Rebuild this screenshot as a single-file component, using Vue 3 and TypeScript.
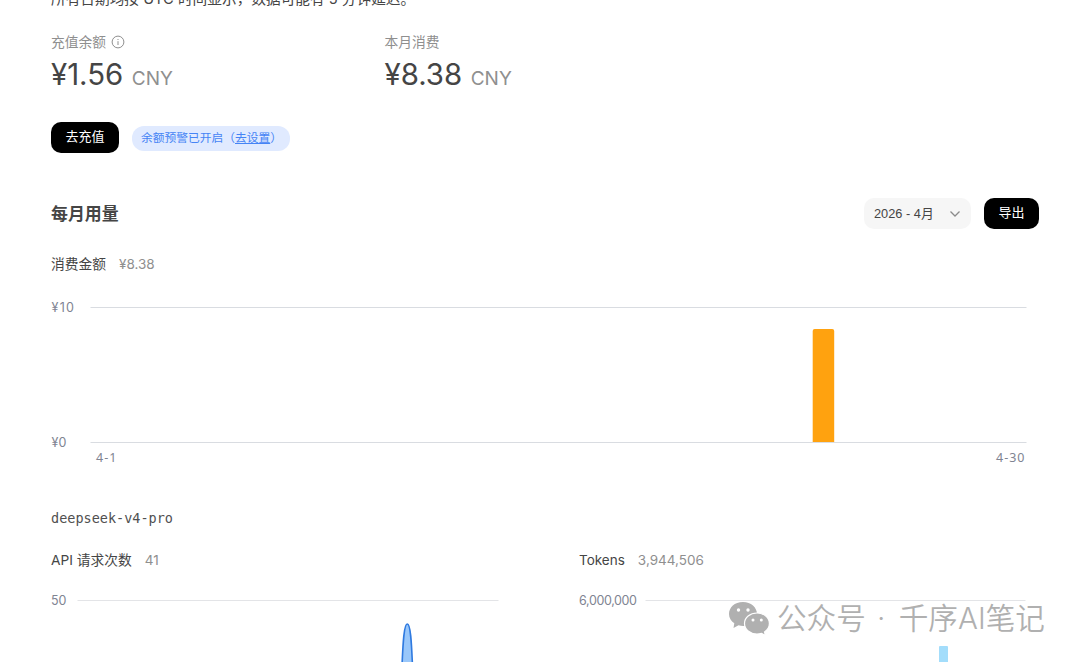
<script setup lang="ts">
interface Balance {
  label: string
  amount: string
  info: boolean
}

const balances: Balance[] = [
  { label: '充值余额', amount: '¥1.56', info: true },
  { label: '本月消费', amount: '¥8.38', info: false },
]
</script>

<template>
  <main class="page">
    <p class="notice">所有日期均按 UTC 时间显示，数据可能有 5 分钟延迟。</p>

    <section class="balances">
      <div v-for="b in balances" :key="b.label" class="balance">
        <div class="balance-label">
          <span>{{ b.label }}</span>
          <svg v-if="b.info" class="info" viewBox="0 0 14 14" width="14" height="14">
            <circle cx="7" cy="7" r="5.9" />
            <path d="M7 6.2V10M7 4V5" />
          </svg>
        </div>
        <div class="balance-value">
          <span class="amount">{{ b.amount }}</span>
          <span class="currency">CNY</span>
        </div>
      </div>
    </section>

    <section class="actions">
      <button class="btn recharge">去充值</button>
      <div class="alert">余额预警已开启（<a>去设置</a>）</div>
    </section>

    <header class="usage-head">
      <h2>每月用量</h2>
      <div class="select">
        <span>2026 - 4月</span>
        <svg viewBox="0 0 12 8" width="12" height="8"><path d="M1.500 1.500L6 6L10.500 1.500" /></svg>
      </div>
      <button class="btn export">导出</button>
    </header>

    <div class="metric cost"><span class="cjk">消费金额</span><em>¥8.38</em></div>
    <svg class="chart" width="988" height="180" viewBox="0 0 988 180">
      <path class="grid" d="M39.500 12.500H975.500M39.500 147.500H975.500" />
      <path class="cost-bar" d="M761.700 147V36q0-2 2-2h17.500q2 0 2 2V147z" />
      <text class="axis" x="0.500" y="17" textLength="22.500">¥10</text>
      <text class="axis" x="0.500" y="152" textLength="15">¥0</text>
      <text class="axis date" x="45" y="167" textLength="20.500">4-1</text>
      <text class="axis date" x="945" y="167" textLength="28.500">4-30</text>
    </svg>

    <h3 class="model">deepseek-v4-pro</h3>
    <section class="charts">
      <div class="panel">
        <div class="metric"><span class="cjk">API 请求次数</span><em>41</em></div>
        <svg class="chart" width="460" height="92" viewBox="0 0 460 92">
          <path class="grid soft" d="M26.500 30.500H447.500" />
          <text class="axis" x="0" y="35" textLength="15.500">50</text>
          <path class="request-line" d="M351 96C352 72 353 54 356.300 54S360.500 72 361.500 96" />
        </svg>
      </div>
      <div class="panel">
        <div class="metric"><span class="tokens">Tokens</span><em>3,944,506</em></div>
        <svg class="chart" width="460" height="92" viewBox="0 0 460 92">
          <path class="grid soft" d="M66.500 30.500H446.500" />
          <text class="axis" x="0" y="35" textLength="58">6,000,000</text>
          <path class="token-bar" d="M360 92V77q0-1 1-1h7q1 0 1 1V92z" />
        </svg>
      </div>
    </section>

    <aside class="watermark">
      <svg viewBox="0 0 42 34" width="42" height="34">
        <path class="bubble" d="M15 1C6.500 1 1 6.500 1 13c0 4 2 7 5.300 9.300L5.500 27l5-2.700c1.500.4 3 .6 5 .6C23 25 29 19.500 29 13S23 1 15 1z" />
        <path class="bubble front" d="M29 12c-7 0-12.500 4.600-12.500 10.500S22 33 29 33c1.500 0 3-.2 4.500-.7l4 2.200-1-3.600c3-2 4.900-5 4.900-8.400C41.400 16.600 36 12 29 12z" />
        <circle cx="10.500" cy="9" r="1.700" /><circle cx="20" cy="9" r="1.700" />
        <circle cx="25" cy="19" r="1.500" /><circle cx="33.300" cy="19" r="1.500" />
      </svg>
      <span class="wm-kind">公众号</span><span class="wm-dot">·</span><span class="wm-name">千序AI笔记</span>
    </aside>
  </main>
</template>

<style>
body {
  background: #fff;
  overflow: hidden;
}
</style>

<style scoped>
.page {
  position: relative;
  box-sizing: border-box;
  width: 1080px;
  height: 662px;
  padding: 0 41px 0 51px;
  overflow: hidden;
  color: #454545;
  font-family: Inter, "Noto Sans CJK SC", sans-serif;
  font-size: 13.750px;
}
.notice {
  height: 20px;
  margin: -11px 0 0;
  font-size: 14.680px;
  line-height: 20px;
  white-space: nowrap;
}
.balances {
  display: flex;
  margin-top: 23px;
}
.balance {
  width: 333.500px;
}
.balance-label {
  display: flex;
  align-items: center;
  gap: 5px;
  height: 20px;
  color: #8f8f8f;
}
.balance-label span {
  height: 20px;
  line-height: 20px;
}
.info {
  fill: none;
  stroke: #8f8f8f;
  stroke-width: 1;
}
.balance-value {
  display: flex;
  align-items: baseline;
  gap: 8.500px;
  height: 44px;
  line-height: 45px;
}
.amount {
  font-size: 29.400px;
}
.currency {
  color: #8f8f8f;
  font-size: 19px;
}
.actions {
  display: flex;
  align-items: center;
  gap: 13px;
  height: 31px;
  margin-top: 26px;
}
.btn {
  height: 31px;
  padding: 0 0 2px;
  border: 0;
  border-radius: 10px;
  background: #000;
  color: #fff;
  font: 13px/29px Inter, "Noto Sans CJK SC", sans-serif;
}
.recharge {
  width: 68px;
}
.alert {
  box-sizing: border-box;
  width: 158px;
  height: 25px;
  margin-top: 1px;
  padding-left: 9px;
  border-radius: 12px;
  background: #e0eaff;
  color: #4584f5;
  font-size: 11.750px;
  line-height: 24px;
  white-space: nowrap;
}
.alert a {
  text-decoration: underline;
}
.usage-head {
  display: flex;
  align-items: center;
  height: 31px;
  margin-top: 45px;
}
.usage-head h2 {
  flex: 1;
  margin: 0;
  font-size: 16.900px;
  font-weight: 700;
  line-height: 24px;
}
.select {
  display: flex;
  align-items: center;
  justify-content: space-between;
  box-sizing: border-box;
  width: 107px;
  height: 31px;
  margin-right: 13px;
  padding: 0 10px;
  border-radius: 10px;
  background: #f6f6f6;
  font-family: "Liberation Sans", "Noto Sans CJK SC", sans-serif;
  font-size: 12.800px;
  line-height: 30px;
}
.select svg {
  fill: none;
  stroke: #8b8b8b;
  stroke-width: 1.300;
}
.export {
  width: 55px;
}
.metric {
  display: flex;
  align-items: center;
  gap: 13px;
  height: 20px;
  white-space: nowrap;
}
.metric em {
  color: #8f8f8f;
  font-size: 13.500px;
  font-style: normal;
}
.cjk {
  height: 20px;
  line-height: 20px;
}
.tokens {
  font-size: 13.500px;
}
.cost {
  margin-top: 25px;
}
.chart {
  display: block;
}
.cost + .chart {
  margin-top: 21px;
}
.grid {
  fill: none;
  stroke: #d9dce1;
}
.grid.soft {
  stroke: #e3e4e7;
}
.axis {
  fill: #808492;
  font: 12.500px Inter, sans-serif;
}
.date {
  font-family: "Noto Sans", sans-serif;
}
.cost-bar {
  fill: #ffa20f;
}
.request-line {
  fill: #99c7fa;
  stroke: #2f7ae0;
  stroke-width: 1.600;
}
.token-bar {
  fill: #a3ddfb;
}
.model {
  height: 20px;
  margin: 33px 0 0;
  color: #505050;
  font: 13.500px/20px "DejaVu Sans Mono", monospace;
}
.charts {
  display: grid;
  grid-template-columns: 528px 460px;
  margin-top: 22px;
}
.watermark {
  position: absolute;
  top: 600px;
  left: 728px;
  display: flex;
  align-items: center;
  height: 36px;
  color: #b0b0b0;
  font: 350 29.600px/36px Inter, "Noto Sans CJK SC", sans-serif;
  white-space: nowrap;
}
.bubble {
  fill: #b0b0b0;
}
.front {
  stroke: #fff;
  stroke-width: 1.200;
}
.watermark circle {
  fill: #fff;
}
.wm-kind {
  margin-left: 7px;
}
.wm-dot {
  width: 31px;
  margin-right: 2px;
  text-align: center;
}
</style>
